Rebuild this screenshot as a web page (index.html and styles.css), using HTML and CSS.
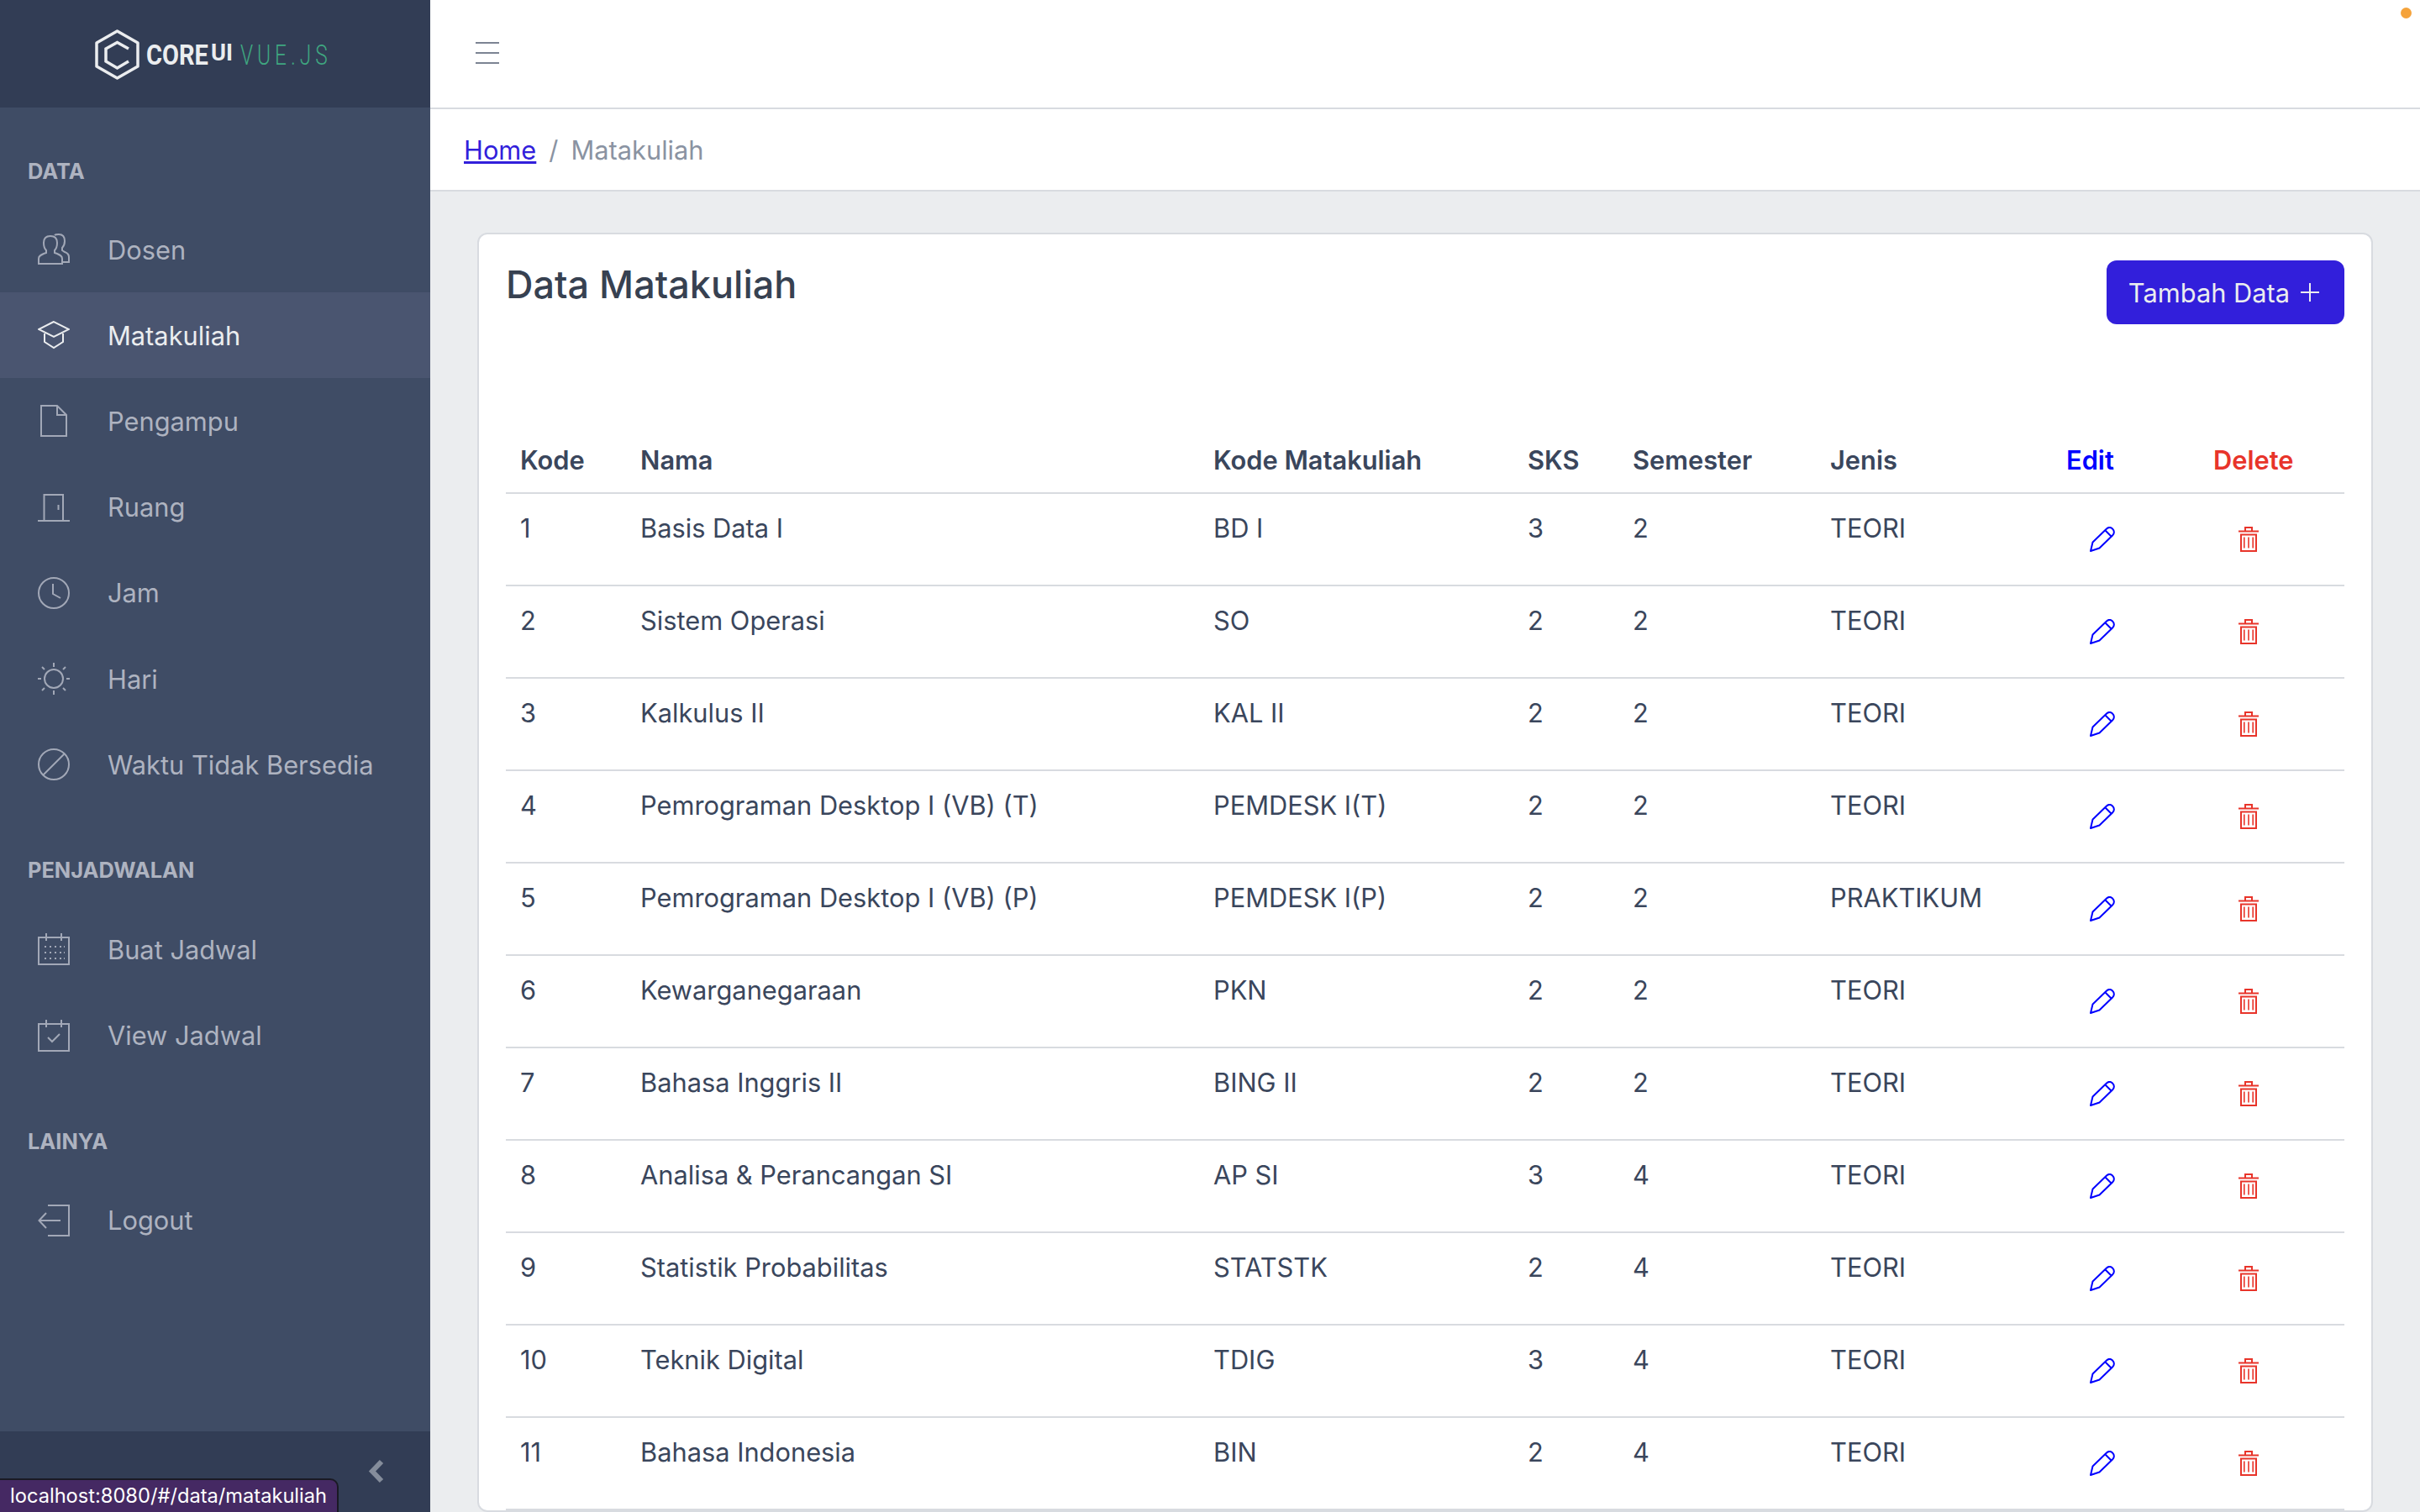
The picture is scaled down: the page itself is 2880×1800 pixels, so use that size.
FILE: index.html
```html
<!DOCTYPE html>
<html lang="en">
<head>
  <meta charset="UTF-8" />
  <title>Data Matakuliah</title>
  <link rel="stylesheet" href="styles.css">
</head>
<body>
  <svg class="defs" width="0" height="0">
    <symbol id="i-pencil" viewBox="0 0 30 30">
      <path d="M1 29L3.500 18.500 19.500 3C22 .500 25 .500 27 2.500c2.500 2.500 2.500 5.500 0 8L11.500 25.500z M18.500 4.500l7 7" fill="none" stroke="currentColor" stroke-width="2" stroke-linejoin="round"/>
    </symbol>
    <symbol id="i-trash" viewBox="0 0 24 30">
      <path d="M0 5.500h24 M8 5V1h8v4 M3 9.500h18V29H3z" fill="none" stroke="currentColor" stroke-width="2"/>
      <path d="M6.800 12.500v13 M12 12.500v13 M17.200 12.500v13" fill="none" stroke="currentColor" stroke-width="1.600"/>
    </symbol>
  </svg>

  <aside class="sidebar">
    <div class="brand">
      <svg class="logo" width="290" height="64" viewBox="110 33 290 64">
        <path d="M139.500 37L164 51v28l-24.500 14L115 79V51z" fill="none" stroke="#ebedef" stroke-width="3.500" stroke-linejoin="round"/>
        <path d="M153 58l-13.500-7.500L126 58v15l13.500 8 13.500-8" fill="none" stroke="#ebedef" stroke-width="3.500"/>
        <text class="logo-core" transform="translate(174 77) scale(.84 1)" textLength="88" lengthAdjust="spacingAndGlyphs">CORE</text>
        <text class="logo-ui" x="251" y="72" textLength="26" lengthAdjust="spacingAndGlyphs">UI</text>
        <text class="logo-vue" transform="translate(286 77) scale(.72 1)" textLength="144">VUE.JS</text>
      </svg>
    </div>

    <nav class="nav">
      <div class="nav-title">DATA</div>
      <a class="nav-item" href="#">
        <svg class="nav-icon" viewBox="0 0 38 38"><path d="M1 36v-6c0-3 2-4 6-6l3-1v-3c-2-2-3-5-3-9 0-5 3-8 8-8s8 3 8 8c0 4-1 7-3 9v3l3 1c4 2 6 3 6 6v6z M20 2c1-1 3-1 5-1 5 0 7 3 7 8 0 4-1 6-3 8v3l3 2c3 1 5 3 5 6v6h-8"/></svg>
        <span>Dosen</span>
      </a>
      <a class="nav-item active" href="#">
        <svg class="nav-icon" viewBox="0 0 38 38"><path d="M19 3L1 12l18 9 18-9z M8 17v10l11 7 11-7V17"/></svg>
        <span>Matakuliah</span>
      </a>
      <a class="nav-item" href="#">
        <svg class="nav-icon" viewBox="0 0 38 38"><path d="M4 1h19l11 11v25H4z M23 1v11h11"/></svg>
        <span>Pengampu</span>
      </a>
      <a class="nav-item" href="#">
        <svg class="nav-icon" viewBox="0 0 38 38"><path d="M0 35h38 M7.500 35V4h22.500v31 M24.500 16v6"/></svg>
        <span>Ruang</span>
      </a>
      <a class="nav-item" href="#">
        <svg class="nav-icon" viewBox="0 0 38 38"><circle cx="19" cy="19" r="18"/><path d="M18 8v12l9 5"/></svg>
        <span>Jam</span>
      </a>
      <a class="nav-item" href="#">
        <svg class="nav-icon" viewBox="0 0 38 38"><circle cx="19" cy="19" r="11"/><path d="M19 0v5 M19 33v5 M0 19h4 M34 19h4 M5 5l3 3 M30 30l3 3 M5 33l3-3 M30 8l3-3"/></svg>
        <span>Hari</span>
      </a>
      <a class="nav-item" href="#">
        <svg class="nav-icon" viewBox="0 0 38 38"><circle cx="19" cy="19" r="18"/><path d="M6 32L32 6"/></svg>
        <span>Waktu Tidak Bersedia</span>
      </a>

      <div class="nav-title">PENJADWALAN</div>
      <a class="nav-item" href="#">
        <svg class="nav-icon" viewBox="0 0 38 38"><path d="M1 5h36v32H1z M10 0v9 M28 0v9"/><path d="M8 16h2 M14 16h2 M20 16h2 M26 16h2 M31 16h1 M8 23h2 M14 23h2 M20 23h2 M26 23h2 M31 23h1 M8 30h2 M14 30h2 M20 30h2 M26 30h2 M31 30h1"/></svg>
        <span>Buat Jadwal</span>
      </a>
      <a class="nav-item" href="#">
        <svg class="nav-icon" viewBox="0 0 38 38"><path d="M1 5h36v32H1z M10 0v9 M28 0v9 M12 21l5 5 9-9"/></svg>
        <span>View Jadwal</span>
      </a>

      <div class="nav-title">LAINYA</div>
      <a class="nav-item" href="#">
        <svg class="nav-icon" viewBox="0 0 38 38"><path d="M12 1h25v36H12 M27 19H2 M10 10l-8.500 9 8.500 9"/></svg>
        <span>Logout</span>
      </a>
    </nav>

    <div class="sidebar-foot">
      <svg class="chevron" width="20" height="30" viewBox="0 0 20 30"><path d="M16 3L5 14.500 16 26" fill="none" stroke="currentColor" stroke-width="6"/></svg>
    </div>
  </aside>

  <div class="main">
    <header class="topbar">
      <span class="burger"><i></i><i></i><i></i></span>
    </header>
    <div class="crumbs">
      <a href="#">Home</a>
      <span class="sep">/</span>
      <span class="current">Matakuliah</span>
    </div>

    <section class="content">
      <div class="card">
        <div class="card-head">
          <h2>Data Matakuliah</h2>
          <button class="btn-add">Tambah Data
            <svg width="24" height="24" viewBox="0 0 24 24"><path d="M12 1v22 M1 12h22" stroke="currentColor" stroke-width="2"/></svg>
          </button>
        </div>

        <table class="grid">
          <colgroup>
            <col class="c-kode"><col class="c-nama"><col class="c-mk"><col class="c-sks"><col class="c-sem"><col class="c-jenis"><col class="c-edit"><col class="c-del">
          </colgroup>
          <thead>
            <tr>
              <th>Kode</th><th>Nama</th><th>Kode Matakuliah</th><th>SKS</th><th>Semester</th><th>Jenis</th>
              <th class="th-edit">Edit</th><th class="th-del">Delete</th>
            </tr>
          </thead>
          <tbody>
            <tr><td>1</td><td>Basis Data I</td><td>BD I</td><td>3</td><td>2</td><td>TEORI</td><td class="act-edit"><svg class="pencil"><use href="#i-pencil"/></svg></td><td class="act-del"><svg class="trash"><use href="#i-trash"/></svg></td></tr>
            <tr><td>2</td><td>Sistem Operasi</td><td>SO</td><td>2</td><td>2</td><td>TEORI</td><td class="act-edit"><svg class="pencil"><use href="#i-pencil"/></svg></td><td class="act-del"><svg class="trash"><use href="#i-trash"/></svg></td></tr>
            <tr><td>3</td><td>Kalkulus II</td><td>KAL II</td><td>2</td><td>2</td><td>TEORI</td><td class="act-edit"><svg class="pencil"><use href="#i-pencil"/></svg></td><td class="act-del"><svg class="trash"><use href="#i-trash"/></svg></td></tr>
            <tr><td>4</td><td>Pemrograman Desktop I (VB) (T)</td><td>PEMDESK I(T)</td><td>2</td><td>2</td><td>TEORI</td><td class="act-edit"><svg class="pencil"><use href="#i-pencil"/></svg></td><td class="act-del"><svg class="trash"><use href="#i-trash"/></svg></td></tr>
            <tr><td>5</td><td>Pemrograman Desktop I (VB) (P)</td><td>PEMDESK I(P)</td><td>2</td><td>2</td><td>PRAKTIKUM</td><td class="act-edit"><svg class="pencil"><use href="#i-pencil"/></svg></td><td class="act-del"><svg class="trash"><use href="#i-trash"/></svg></td></tr>
            <tr><td>6</td><td>Kewarganegaraan</td><td>PKN</td><td>2</td><td>2</td><td>TEORI</td><td class="act-edit"><svg class="pencil"><use href="#i-pencil"/></svg></td><td class="act-del"><svg class="trash"><use href="#i-trash"/></svg></td></tr>
            <tr><td>7</td><td>Bahasa Inggris II</td><td>BING II</td><td>2</td><td>2</td><td>TEORI</td><td class="act-edit"><svg class="pencil"><use href="#i-pencil"/></svg></td><td class="act-del"><svg class="trash"><use href="#i-trash"/></svg></td></tr>
            <tr><td>8</td><td>Analisa &amp; Perancangan SI</td><td>AP SI</td><td>3</td><td>4</td><td>TEORI</td><td class="act-edit"><svg class="pencil"><use href="#i-pencil"/></svg></td><td class="act-del"><svg class="trash"><use href="#i-trash"/></svg></td></tr>
            <tr><td>9</td><td>Statistik Probabilitas</td><td>STATSTK</td><td>2</td><td>4</td><td>TEORI</td><td class="act-edit"><svg class="pencil"><use href="#i-pencil"/></svg></td><td class="act-del"><svg class="trash"><use href="#i-trash"/></svg></td></tr>
            <tr><td>10</td><td>Teknik Digital</td><td>TDIG</td><td>3</td><td>4</td><td>TEORI</td><td class="act-edit"><svg class="pencil"><use href="#i-pencil"/></svg></td><td class="act-del"><svg class="trash"><use href="#i-trash"/></svg></td></tr>
            <tr><td>11</td><td>Bahasa Indonesia</td><td>BIN</td><td>2</td><td>4</td><td>TEORI</td><td class="act-edit"><svg class="pencil"><use href="#i-pencil"/></svg></td><td class="act-del"><svg class="trash"><use href="#i-trash"/></svg></td></tr>
          </tbody>
        </table>
      </div>
    </section>
  </div>

  <div class="status-url">localhost:8080/#/data/matakuliah</div>
  <span class="dot"></span>
</body>
</html>
```

FILE: styles.css
```css
html, body { height: 100%; }
body {
  margin: 0;
  height: 1800px;
  overflow: hidden;
  display: flex;
  font-family: Inter, "Liberation Sans", sans-serif;
  font-size: 30.800px;
  line-height: 45px;
  color: #3a465c;
  background: #ebedef;
}
.defs { position: absolute; }

/* sidebar */
.sidebar {
  width: 512px;
  height: 1800px;
  flex: none;
  display: flex;
  flex-direction: column;
  background: #3f4c65;
}
.brand {
  height: 128px;
  flex: none;
  background: #323d55;
}
.logo { display: block; margin: 33px 0 0 110px; }
.logo-core, .logo-ui { font-family: Roboto, sans-serif; font-weight: 700; fill: #ebedef; }
.logo-core { font-size: 34px; }
.logo-ui { font-size: 27px; }
.logo-vue { font-family: Roboto, sans-serif; font-weight: 300; font-size: 34px; fill: #3fa680; }

.nav { flex: 1; }
.nav-title {
  padding: 57px 0 25px 33px;
  font-size: 25.400px;
  line-height: 36px;
  font-weight: 700;
  color: #aeb3c0;
}
.nav-title:first-child { padding-top: 58px; padding-bottom: 24px; }
.nav-item {
  height: 102.200px;
  display: flex;
  align-items: center;
  padding-left: 45px;
  color: #aeb3c0;
  text-decoration: none;
}
.nav-item.active { background: #4a5570; color: #ebedef; }
.nav-icon {
  width: 38px;
  height: 38px;
  margin-right: 45px;
  flex: none;
  fill: none;
  stroke: #a2a8b7;
  stroke-width: 2;
}
.active .nav-icon { stroke: #ebedef; }

.sidebar-foot {
  height: 96px;
  flex: none;
  background: #323d55;
  display: flex;
  align-items: center;
  justify-content: flex-end;
  padding-right: 54px;
  color: #858d9b;
}

/* top */
.main { flex: 1; min-width: 0; }
.topbar {
  height: 128px;
  background: #fff;
  border-bottom: 2px solid #d8dbe0;
  display: flex;
  align-items: center;
  padding-left: 54px;
}
.burger { display: flex; flex-direction: column; gap: 10px; width: 28px; margin-bottom: 2px; }
.burger i { height: 2px; background: #7c8493; }
.crumbs {
  height: 96px;
  background: #fff;
  border-bottom: 2px solid #d8dbe0;
  display: flex;
  align-items: center;
  gap: 15px;
  padding-left: 40px;
}
.crumbs a { color: #321fdb; }
.sep, .current { color: #8a93a2; }

/* card */
.content { padding: 49px 56px 0; }
.card {
  background: #fff;
  border: 2px solid #d8dbe0;
  border-radius: 12px;
  padding: 31px 32px 0;
}
.card-head {
  height: 215px;
  display: flex;
  justify-content: space-between;
  align-items: flex-start;
}
.card-head h2 {
  margin: 0;
  font-size: 45px;
  line-height: 58px;
  font-weight: 500;
  color: #374151;
}
.btn-add {
  height: 76px;
  width: 283px;
  padding: 0 3px 0 0;
  border: 0;
  border-radius: 12px;
  background: #321fdb;
  color: #ebedef;
  font: inherit;
  display: flex;
  align-items: center;
  justify-content: center;
  gap: 12px;
}

/* table */
.grid { width: 100%; table-layout: fixed; border-collapse: collapse; }
.c-kode { width: 143px; }
.c-nama { width: 682px; }
.c-mk { width: 374px; }
.c-sks { width: 125px; }
.c-sem { width: 235px; }
.c-jenis { width: 281px; }
.c-edit { width: 175px; }
.grid th {
  text-align: left;
  font-weight: 600;
  padding: 0 16px 16px 17px;
  border-bottom: 2px solid #d8dbe0;
}
.grid td {
  height: 90px;
  padding: 18px 16px 0 17px;
  vertical-align: top;
  border-bottom: 2px solid #d8dbe0;
}
.grid .th-edit { color: #0000ff; }
.grid .th-del { color: #e8342a; }
.act-edit { color: #0000ff; }
.act-del { color: #e8342a; }
.pencil { width: 30px; height: 30px; display: block; margin: 21px 0 0 28px; }
.trash { width: 24px; height: 30px; display: block; margin: 21px 0 0 30px; }

/* overlays */
.status-url {
  position: absolute;
  left: -2px;
  bottom: -2px;
  height: 42px;
  padding: 0 12px;
  box-sizing: border-box;
  border: 2px solid #1a1a24;
  border-radius: 0 10px 0 0;
  background: #452963;
  color: #fff;
  font-size: 23.650px;
  line-height: 38px;
}
.dot {
  position: absolute;
  right: 10px;
  top: 9px;
  width: 13px;
  height: 13px;
  border-radius: 50%;
  background: #f5a33b;
}
```
